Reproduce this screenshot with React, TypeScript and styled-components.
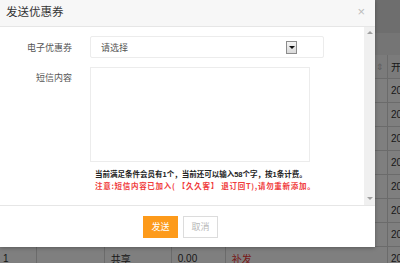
import React from "react";
import styled, { createGlobalStyle } from "styled-components";

const Global = createGlobalStyle`
  html, body { margin: 0; padding: 0; }
  body { font-family: "Liberation Sans", "Noto Sans CJK SC", sans-serif; background: #fff; }
`;

const Stage = styled.div`
  position: relative;
  width: 400px;
  height: 263px;
  overflow: hidden;
`;

/* ---------- background page (behind overlay) ---------- */
const Page = styled.div`
  display: flex;
  flex-direction: column;
  width: 400px;
  background: #fff;
`;

const Toolbar = styled.div`
  height: 33px;
  background: #dcdcdc;
`;

const Band = styled.div`
  height: 22px;
  background: #ebebeb;
`;

const Grid = styled.div`
  display: grid;
  grid-template-columns: 37px 68px 67px 54px 162px 60px;
`;

const Cell = styled.div<{ $head?: boolean; $red?: boolean; $align?: string }>`
  height: 24px;
  box-sizing: border-box;
  border-right: 1px solid #d6d6d6;
  border-bottom: 1px solid #d6d6d6;
  background: ${(p) => (p.$head ? "#f6f6f6" : "#fff")};
  color: ${(p) => (p.$red ? "#e33" : "#333")};
  font-size: 10px;
  display: flex;
  align-items: center;
  justify-content: ${(p) => p.$align || "flex-start"};
  padding: 0 3px;
  white-space: nowrap;
  overflow: hidden;
`;

const SortIcon = styled.span`
  color: #bbb;
  font-size: 9px;
`;

const Overlay = styled.div`
  position: absolute;
  inset: 0;
  background: rgba(0, 0, 0, 0.5);
`;

/* ---------- modal ---------- */
const Modal = styled.div`
  position: absolute;
  left: 0;
  top: 0;
  width: 375px;
  height: 247px;
  background: #fff;
  display: flex;
  flex-direction: column;
  box-shadow: 0 1px 4px rgba(0, 0, 0, 0.3);
`;

const Header = styled.div`
  height: 26px;
  flex: none;
  background: #f7f7f7;
  border-bottom: 1px solid #e6e6e6;
  display: flex;
  align-items: center;
  justify-content: space-between;
  padding: 0 10px 0 6px;
`;

const Title = styled.div`
  font-size: 11.5px;
  color: #333;
  font-family: "Noto Sans CJK SC", sans-serif;
  line-height: 1;
  margin-top: -2px;
`;

const Close = styled.span`
  font-size: 13px;
  color: #bdbdbd;
  line-height: 1;
  margin-top: -4px;
`;

const Body = styled.div`
  height: 178px;
  flex: none;
  display: flex;
`;

const Content = styled.div`
  flex: 1;
  padding-top: 9px;
  display: flex;
  flex-direction: column;
  gap: 9px;
`;

const FormRow = styled.div<{ $top?: boolean }>`
  display: flex;
  align-items: ${(p) => (p.$top ? "flex-start" : "center")};
  gap: 18px;
`;

const Label = styled.div<{ $top?: boolean }>`
  width: 72px;
  text-align: right;
  font-size: 9px;
  color: #555;
  font-family: "Noto Sans CJK SC", sans-serif;
  line-height: 1;
  padding-top: ${(p) => (p.$top ? "6px" : "0")};
`;

const Select = styled.div`
  width: 234px;
  height: 22px;
  box-sizing: border-box;
  border: 1px solid #ececec;
  border-radius: 2px;
  display: flex;
  align-items: center;
  justify-content: space-between;
  padding: 0 26px 0 10px;
  font-size: 9px;
  color: #555;
  font-family: "Noto Sans CJK SC", sans-serif;
`;

const ArrowBtn = styled.span`
  width: 11px;
  height: 13px;
  box-sizing: border-box;
  border: 1px solid #8c8c8c;
  background: linear-gradient(#f5f5f5, #d9d9d9);
  display: flex;
  align-items: center;
  justify-content: center;
  &::after {
    content: "";
    border-top: 3px solid #111;
    border-left: 3px solid transparent;
    border-right: 3px solid transparent;
  }
`;

const TextArea = styled.div`
  width: 220px;
  height: 95px;
  box-sizing: border-box;
  border: 1px solid #ececec;
`;

const Hints = styled.div`
  margin: -3px 0 0 95px;
  display: flex;
  flex-direction: column;
`;

const Hint = styled.div<{ $red?: boolean }>`
  font-size: 7.5px;
  line-height: 11px;
  font-weight: bold;
  white-space: nowrap;
  font-family: "Noto Sans CJK SC", sans-serif;
  letter-spacing: ${(p) => (p.$red ? "0.7px" : "0")};
  color: ${(p) => (p.$red ? "#f03c3c" : "#222")};
`;

const Digits = styled.span`
  font-family: "Liberation Sans", sans-serif;
`;

const Scrollbar = styled.div`
  width: 11px;
  flex: none;
  background: #f0f0f0;
  display: flex;
  flex-direction: column;
  justify-content: space-between;
  align-items: center;
  padding: 4px 0 5px;
  box-sizing: border-box;
`;

const ScrollArrow = styled.span<{ $down?: boolean }>`
  width: 0;
  height: 0;
  border-left: 3px solid transparent;
  border-right: 3px solid transparent;
  ${(p) => (p.$down ? "border-top: 3px solid #a0a0a0;" : "border-bottom: 3px solid #a0a0a0;")}
`;

const Footer = styled.div`
  flex: 1;
  border-top: 1px solid #e6e6e6;
  display: flex;
  align-items: center;
  justify-content: flex-start;
  gap: 5px;
  padding-left: 143px;
`;

const Button = styled.button<{ $primary?: boolean }>`
  width: 35px;
  height: 22px;
  box-sizing: border-box;
  padding: 0;
  font-size: 9px;
  font-family: "Noto Sans CJK SC", sans-serif;
  border: 1px solid ${(p) => (p.$primary ? "#fd9a1a" : "#dcdcdc")};
  background: ${(p) => (p.$primary ? "#fd9a1a" : "#fff")};
  color: ${(p) => (p.$primary ? "#fff" : "#b8b8b8")};
`;

const rowsRight = ["20", "20", "20", "20", "20", "20", "20"];

export default function App() {
  return (
    <Stage>
      <Global />
      <Page>
        <Toolbar />
        <Band />
        <Grid>
          <Cell $head />
          <Cell $head />
          <Cell $head />
          <Cell $head />
          <Cell $head $align="flex-end">
            <SortIcon>⇕</SortIcon>
          </Cell>
          <Cell $head>开始时间</Cell>
          {rowsRight.map((t, i) => (
            <React.Fragment key={i}>
              <Cell>1</Cell>
              <Cell>共享</Cell>
              <Cell>0.00</Cell>
              <Cell $red>补发</Cell>
              <Cell />
              <Cell>2019-01</Cell>
            </React.Fragment>
          ))}
          <Cell>1</Cell>
          <Cell />
          <Cell>&nbsp;共享</Cell>
          <Cell>&nbsp;0.00</Cell>
          <Cell $red>&nbsp;补发</Cell>
          <Cell>2019-01</Cell>
        </Grid>
      </Page>
      <Overlay />
      <Modal>
        <Header>
          <Title>发送优惠券</Title>
          <Close>×</Close>
        </Header>
        <Body>
          <Content>
            <FormRow>
              <Label>电子优惠券</Label>
              <Select>
                <span>请选择</span>
                <ArrowBtn />
              </Select>
            </FormRow>
            <FormRow $top>
              <Label $top>短信内容</Label>
              <TextArea />
            </FormRow>
            <Hints>
              <Hint>
                当前满足条件会员有<Digits>1</Digits>个，当前还可以输入<Digits>58</Digits>个字，按<Digits>1</Digits>条计费。
              </Hint>
              <Hint $red>注意:短信内容已加入( 【久久客】 退订回T),请勿重新添加。</Hint>
            </Hints>
          </Content>
          <Scrollbar>
            <ScrollArrow />
            <ScrollArrow $down />
          </Scrollbar>
        </Body>
        <Footer>
          <Button $primary>发送</Button>
          <Button>取消</Button>
        </Footer>
      </Modal>
    </Stage>
  );
}
